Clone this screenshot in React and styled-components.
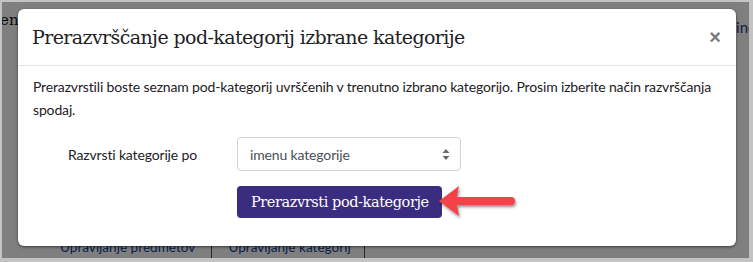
import styled, { createGlobalStyle } from "styled-components";

const GlobalStyle = createGlobalStyle`
  * { box-sizing: border-box; }
  body {
    margin: 0;
    font-family: "Lato", "Liberation Sans", sans-serif;
    color: #1d2125;
  }
`;

const Frame = styled.div`
  width: 753px;
  height: 262px;
  border-style: solid;
  border-color: #c3c3c3;
  border-width: 2px 4px 4px 2px;
  overflow: hidden;
`;

const Page = styled.div`
  position: relative;
  height: 100%;
  background: #fff;
  display: flex;
  flex-direction: column;
  justify-content: space-between;
`;

const TopRow = styled.div`
  display: flex;
  justify-content: space-between;
  padding-top: 8px;
`;

const CutWord = styled.span`
  font-family: ${(p) => (p.$serif ? '"DejaVu Serif", serif' : '"Lato", sans-serif')};
  font-size: 15px;
  color: ${(p) => p.$color || "#111"};
  margin-top: ${(p) => p.$top || 0}px;
`;

const BottomNav = styled.nav`
  display: flex;
  align-items: flex-end;
  padding-left: 42px;
  height: 24px;
`;

const NavItem = styled.span`
  font-size: 13.6px;
  color: #0f3f9a;
  padding: 0 ${(p) => p.$gap || 16}px 0 16px;
  line-height: 22px;
`;

const NavSep = styled.span`
  width: 1px;
  height: 18px;
  background: #555;
`;

const Backdrop = styled.div`
  position: absolute;
  inset: 0;
  background: rgba(0, 0, 0, 0.5);
  padding: 7px 15px 0 16px;
`;

const Modal = styled.div`
  width: 718px;
  height: 237px;
  background: #fff;
  border-radius: 6px;
  box-shadow: 0 1px 3px rgba(0, 0, 0, 0.55);
  display: flex;
  flex-direction: column;
`;

const Header = styled.div`
  height: 57px;
  display: flex;
  align-items: center;
  justify-content: space-between;
  padding: 0 15px 0 14px;
  border-bottom: 1px solid #dee2e6;
`;

const Title = styled.h5`
  margin: 0;
  font-family: "DejaVu Serif", serif;
  font-weight: normal;
  font-size: 19px;
  letter-spacing: -0.6px;
  color: #1d2125;
`;

const Close = styled.span`
  font-family: "Liberation Sans", sans-serif;
  font-size: 20px;
  font-weight: bold;
  color: #7a7a7a;
  line-height: 1;
`;

const Body = styled.div`
  padding: 9px 15px 0;
`;

const Intro = styled.p`
  margin: 0 0 16px;
  font-size: 14px;
  letter-spacing: -0.15px;
  line-height: 23px;
`;

const FormGrid = styled.div`
  display: grid;
  grid-template-columns: 204px 224px;
  row-gap: 15px;
  align-items: center;
`;

const Label = styled.label`
  padding-left: 35px;
  font-size: 14px;
  letter-spacing: -0.15px;
`;

const Select = styled.div`
  height: 34px;
  border: 1px solid #ced4da;
  border-radius: 4px;
  display: flex;
  align-items: center;
  justify-content: space-between;
  padding: 0 10px 0 12px;
  font-size: 14px;
  letter-spacing: -0.15px;
  color: #495057;
`;

const ButtonCell = styled.div`
  grid-column: 2;
  position: relative;
`;

const PrimaryButton = styled.button`
  height: 32px;
  padding: 0 13px 0 14px;
  border: none;
  border-radius: 4px;
  background: #3a2c7e;
  color: #fff;
  font-family: "DejaVu Serif", serif;
  font-size: 14.5px;
  letter-spacing: -0.42px;
`;

const Pointer = styled.svg`
  position: absolute;
  left: 201px;
  top: -3px;
  overflow: visible;
`;

function SortArrows() {
  return (
    <svg width="8" height="11" viewBox="0 0 8 11">
      <path d="M4 0 L7.5 4 H0.5 Z M4 11 L7.5 7 H0.5 Z" fill="#6a6a6a" />
    </svg>
  );
}

export default function App() {
  return (
    <>
      <GlobalStyle />
      <Frame>
        <Page>
          <TopRow>
            <CutWord $serif $top={1} style={{ marginLeft: -2 }}>
              eni
            </CutWord>
            <CutWord $color="#1b3a8c" $top={8} style={{ marginRight: -7 }}>
              ine
            </CutWord>
          </TopRow>
          <BottomNav>
            <NavItem>Upravljanje predmetov</NavItem>
            <NavSep />
            <NavItem $gap={13}>Upravljanje kategorij</NavItem>
            <NavSep />
          </BottomNav>
          <Backdrop>
            <Modal>
              <Header>
                <Title>Prerazvrščanje pod-kategorij izbrane kategorije</Title>
                <Close>×</Close>
              </Header>
              <Body>
                <Intro>
                  Prerazvrstili boste seznam pod-kategorij uvrščenih v trenutno izbrano
                  kategorijo. Prosim izberite način razvrščanja spodaj.
                </Intro>
                <FormGrid>
                  <Label>Razvrsti kategorije po</Label>
                  <Select>
                    imenu kategorije
                    <SortArrows />
                  </Select>
                  <ButtonCell>
                    <PrimaryButton>Prerazvrsti pod-kategorje</PrimaryButton>
                    <Pointer width="80" height="36" viewBox="0 0 80 36">
                      <defs>
                        <filter id="sh" x="-20%" y="-40%" width="150%" height="190%">
                          <feDropShadow dx="1" dy="2" stdDeviation="1.6" floodColor="#000" floodOpacity="0.45" />
                        </filter>
                      </defs>
                      <path
                        d="M1 18 L21 3 L19 14 L73 14 A4 4 0 0 1 73 22 L19 22 L21 33 Z"
                        fill="#f5424a"
                        filter="url(#sh)"
                      />
                    </Pointer>
                  </ButtonCell>
                </FormGrid>
              </Body>
            </Modal>
          </Backdrop>
        </Page>
      </Frame>
    </>
  );
}
